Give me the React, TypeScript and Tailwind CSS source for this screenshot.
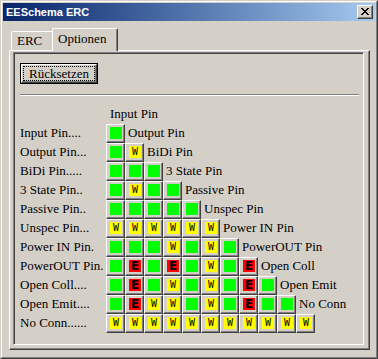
import React from "react";

const rows: [string, string, string][] = [
  ["Input Pin....", "G", "Output Pin"],
  ["Output Pin...", "GW", "BiDi Pin"],
  ["BiDi Pin.....", "GGG", "3 State Pin"],
  ["3 State Pin..", "GWGG", "Passive Pin"],
  ["Passive Pin..", "GGGGG", "Unspec Pin"],
  ["Unspec Pin...", "WWWWWW", "Power IN Pin"],
  ["Power IN Pin.", "GGGWGWG", "PowerOUT Pin"],
  ["PowerOUT Pin.", "GEGEGWGE", "Open Coll"],
  ["Open Coll....", "GEGWGWGEG", "Open Emit"],
  ["Open Emit....", "GEWWGWGEGG", "No Conn"],
  ["No Conn......", "WWWWWWWWWWW", ""],
];

const serif = { fontFamily: '"Liberation Serif", "Times New Roman", serif' };

function Cell({ kind }: { kind: string }) {
  return (
    <div className="w-[19px] h-[19px] shrink-0 border border-t-white border-l-white border-r-[#404040] border-b-[#404040] shadow-[inset_-1px_-1px_#808080] pl-[3px] pt-[2px]">
      {kind === "G" && <div className="w-[12px] h-[12px] bg-[#00ff00]" />}
      {kind === "W" && (
        <div
          className="w-[12px] h-[12px] bg-[#ffff00] flex items-center justify-center text-[10px] leading-[12px] text-black"
          style={{ fontFamily: '"DejaVu Sans Mono", monospace' }}
        >
          W
        </div>
      )}
      {kind === "E" && (
        <div
          className="w-[12px] h-[12px] bg-[#ff0000] flex items-center justify-center text-[12px] leading-[12px] font-black text-black"
          style={{ fontFamily: '"DejaVu Sans", sans-serif' }}
        >
          E
        </div>
      )}
    </div>
  );
}

function CloseIcon() {
  const px = [
    [0, 0], [1, 0], [6, 0], [7, 0],
    [1, 1], [2, 1], [5, 1], [6, 1],
    [2, 2], [3, 2], [4, 2], [5, 2],
    [3, 3], [4, 3],
    [2, 4], [3, 4], [4, 4], [5, 4],
    [1, 5], [2, 5], [5, 5], [6, 5],
    [0, 6], [1, 6], [6, 6], [7, 6],
  ];
  return (
    <svg width="8" height="7" viewBox="0 0 8 7" shapeRendering="crispEdges">
      {px.map(([x, y], i) => (
        <rect key={i} x={x} y={y} width="1" height="1" fill="#000" />
      ))}
    </svg>
  );
}

export default function App() {
  return (
    <div className="w-[378px] h-[359px] bg-[#d4d0c8] border border-t-[#d4d0c8] border-l-[#d4d0c8] border-r-[#404040] border-b-[#404040] flex flex-col overflow-hidden">
      <div className="flex-1 flex flex-col border border-t-white border-l-white border-r-[#808080] border-b-[#808080] p-[1px]">
        {/* Title bar */}
        <div className="h-[18px] flex items-center justify-between bg-gradient-to-r from-[#0a246a] to-[#a6caf0] pl-[3px] pr-[2px]">
          <span
            className="text-white font-bold text-[11px] leading-[18px]"
            style={{ fontFamily: '"Liberation Sans", Arial, sans-serif' }}
          >
            EESchema ERC
          </span>
          <div className="w-[16px] h-[14px] bg-[#d4d0c8] border border-t-white border-l-white border-r-[#404040] border-b-[#404040] shadow-[inset_-1px_-1px_#808080] flex items-center justify-center pr-[1px] pb-[1px]">
            <CloseIcon />
          </div>
        </div>
        {/* Body */}
        <div className="flex-1 pt-[7px] pl-[6px]" style={serif}>
          {/* Tabs */}
          <div className="flex items-end h-[22px] pl-[2px]">
            <div className="w-[41px] h-[19px] border-t border-l border-t-white border-l-white rounded-tl-[2px] pl-[5px] text-[13px] leading-[17px] text-black">
              ERC
            </div>
            <div className="relative z-10 -mb-[1px] w-[66px] h-[23px] bg-[#d4d0c8] border-t border-l border-r border-t-white border-l-white border-r-[#404040] shadow-[inset_-1px_0_#808080] rounded-tl-[2px] rounded-tr-[2px] pl-[5px] text-[13px] leading-[19px] text-black">
              Optionen
            </div>
          </div>
          {/* Panel */}
          <div className="w-[361px] h-[300px] border border-t-white border-l-white border-r-[#404040] border-b-[#404040] shadow-[inset_-1px_-1px_#808080] pt-[1px] pl-[3px]">
            <div className="w-[351px] h-[293px] border border-t-[#808080] border-l-[#808080] border-r-white border-b-white shadow-[inset_1px_1px_#404040,inset_-1px_-1px_#d4d0c8] p-[1px] text-[13px] text-black">
              {/* Button */}
              <div className="mt-[9px] ml-[5px] w-[78px] h-[21px] border border-black flex">
                <div className="flex-1 flex border border-t-white border-l-white border-r-[#404040] border-b-[#404040] shadow-[inset_-1px_-1px_#808080] pt-[1px] pl-[1px] pr-[1px] pb-[1px]">
                  <div className="flex-1 border border-dotted border-black flex items-center justify-center leading-[13px]">
                    Rücksetzen
                  </div>
                </div>
              </div>
              {/* Separator */}
              <div className="mt-[10px] ml-[5px] w-[339px] h-[2px] border-t border-b border-t-[#808080] border-b-white" />
              {/* Header */}
              <div className="h-[28px] flex items-end pl-[95px] pb-[2px]">
                <span className="leading-[17px]">Input Pin</span>
              </div>
              {/* Matrix */}
              <div className="ml-[5px] flex flex-col">
                {rows.map(([label, cells, next]) => (
                  <div key={label} className="flex items-center h-[19px]">
                    <div className="w-[86px] shrink-0 leading-[17px] -mt-[2px] whitespace-pre">{label}</div>
                    {cells.split("").map((c, i) => (
                      <Cell key={i} kind={c} />
                    ))}
                    {next && <div className="ml-[3px] leading-[17px] -mt-[2px] whitespace-nowrap">{next}</div>}
                  </div>
                ))}
              </div>
            </div>
          </div>
        </div>
      </div>
    </div>
  );
}
